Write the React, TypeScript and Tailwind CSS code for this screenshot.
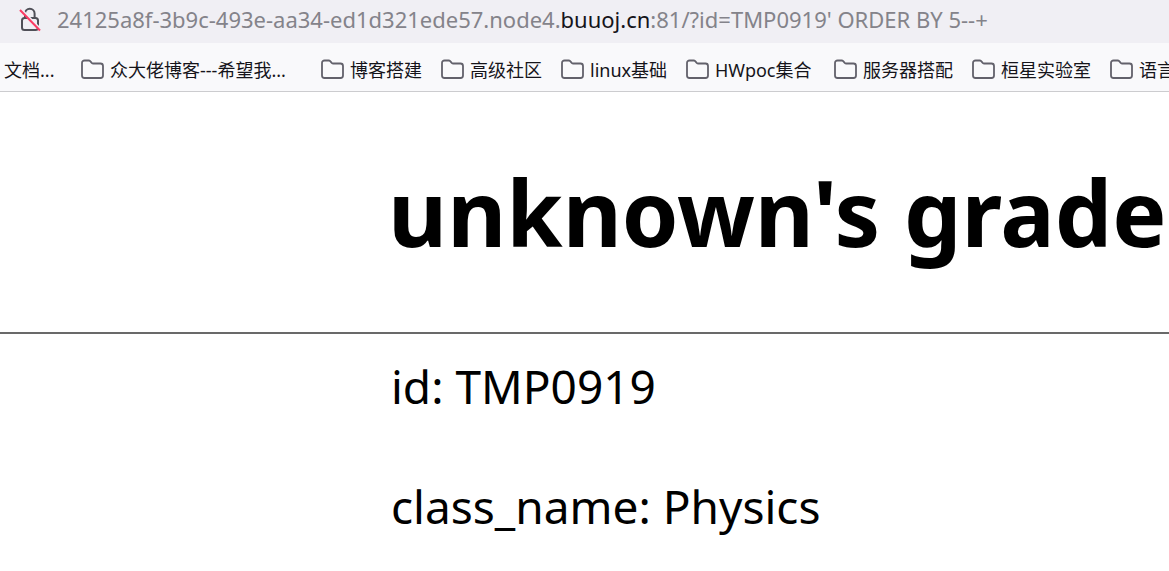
const bookmarks = [
  { label: "众大佬博客---希望我...", width: "w-48" },
  { label: "博客搭建", width: "w-18" },
  { label: "高级社区", width: "w-18" },
  { label: "linux基础", width: "w-[77px]" },
  { label: "HWpoc集合", width: "w-25" },
  { label: "服务器搭配", width: "w-[90px]" },
  { label: "桓星实验室", width: "w-[90px]" },
  { label: "语言学习", width: "w-18" },
];

function InsecureLockIcon() {
  return (
    <svg width="22" height="27" viewBox="0 0 22 27" fill="none" className="shrink-0" aria-hidden="true">
      <path d="M6 13V8.500a4.800 4.800 0 0 1 9.600 0V13" stroke="#4f4f57" strokeWidth="2" />
      <rect x="3" y="13" width="16" height="12" rx="2.500" stroke="#4f4f57" strokeWidth="2" />
      <path d="M2.500 4.500 22 24.500" stroke="#f0eff4" strokeWidth="2" />
      <path d="M1 5 21 25.500" stroke="#fb3b63" strokeWidth="2" />
    </svg>
  );
}

function FolderIcon() {
  return (
    <svg width="24" height="22" viewBox="0 0 24 22" fill="none" className="shrink-0" aria-hidden="true">
      <path
        d="M3.500 1.500h4.200c.6 0 1.100.2 1.500.6L10.700 3.900c.4.400.9.600 1.500.600H19.500A2.500 2.500 0 0 1 22 7V16.500a2.500 2.500 0 0 1-2.500 2.500h-16A2.500 2.500 0 0 1 1 16.500V4A2.500 2.500 0 0 1 3.500 1.500Z"
        stroke="#62616b"
        strokeWidth="1.800"
      />
    </svg>
  );
}

export default function App() {
  return (
    <div className="min-h-screen overflow-hidden bg-white font-['Noto_Sans','Noto_Sans_CJK_SC',sans-serif] text-black">
      <header>
        <div className="flex h-[43px] items-start gap-4 bg-[#f0eff4] pt-[5px] pl-[19px]">
          <InsecureLockIcon />
          <div
            role="textbox"
            aria-label="Address"
            contentEditable
            suppressContentEditableWarning
            spellCheck={false}
            className="text-[22px] leading-7 whitespace-nowrap text-[#84838a] outline-none"
          >
            24125a8f-3b9c-493e-aa34-ed1d321ede57.node4.
            <span className="text-[#15141a]">buuoj.cn</span>
            :81/?id=TMP0919&#39; ORDER BY 5--+
          </div>
        </div>
        <nav
          aria-label="Bookmarks"
          className="flex h-[49px] items-center gap-[19px] overflow-hidden border-b border-[#cccccf] bg-[#f9f9fb] pt-[6px] pl-1 text-[18px] leading-6 whitespace-nowrap text-[#15141a]"
        >
          <a href="#docs" className="w-[58px] shrink-0">
            文档...
          </a>
          {bookmarks.map((b) => (
            <a key={b.label} href="#folder" className="flex shrink-0 items-center gap-[5px]">
              <FolderIcon />
              <span className={b.width}>{b.label}</span>
            </a>
          ))}
        </nav>
      </header>
      <main>
        <h1 className="border-b-2 border-[#696969] pt-12 pb-12 pl-[388px] text-[91px] leading-[144px] font-bold whitespace-nowrap">
          unknown&#39;s grade
        </h1>
        <div className="flex flex-col gap-14 pt-5 pl-[391px] text-[46px] leading-16">
          <p>id: TMP0919</p>
          <p>class_name: Physics</p>
        </div>
      </main>
    </div>
  );
}
